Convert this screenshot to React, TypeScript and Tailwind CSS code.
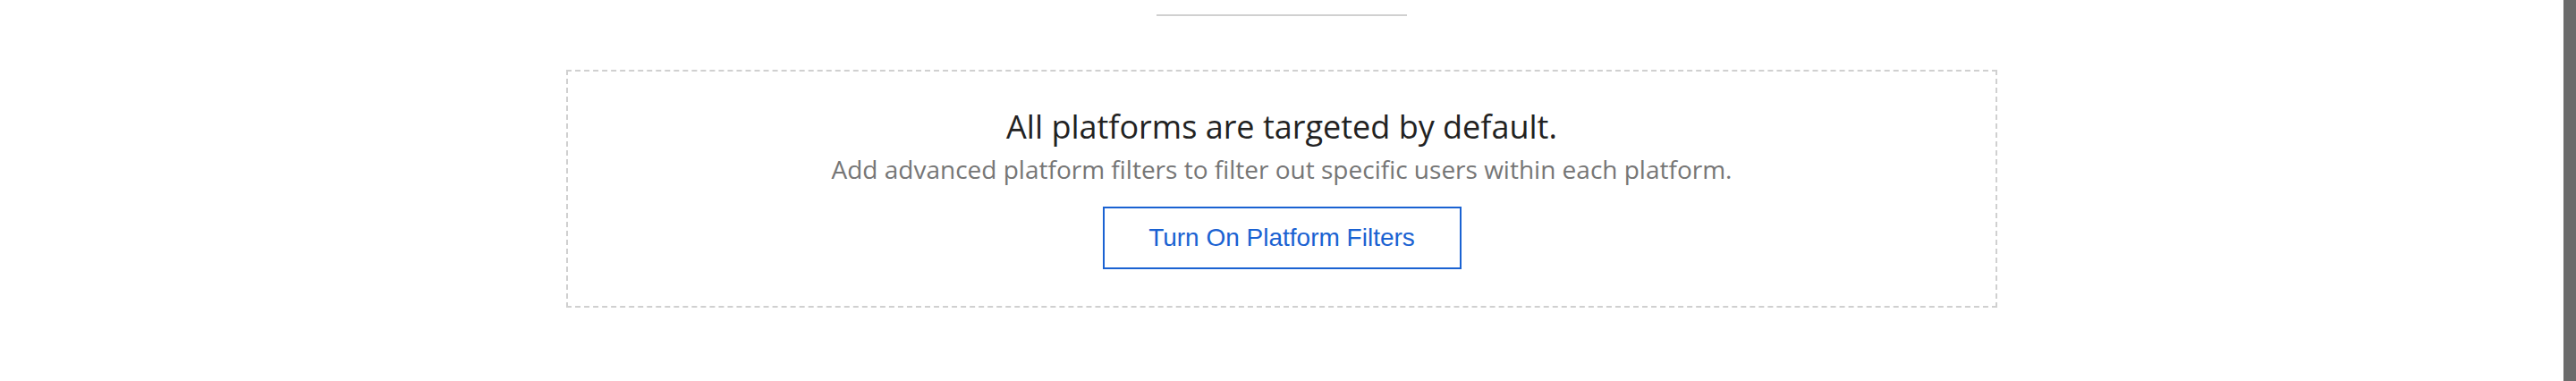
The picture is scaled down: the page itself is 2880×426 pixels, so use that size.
import React from "react";

const PlatformTargeting: React.FC = () => {
	return (
		<div className="flex flex-col items-center pt-[16px]">
			<div className="w-[280px] h-[2px] bg-[#d0d0d0]" />
			<div className="mt-[60px] w-[1600px] border-2 border-dashed border-[#d0d0d0] flex flex-col items-center pt-[42px] pb-[41px]">
				<h2 className="font-['Open_Sans',sans-serif] text-[36px] leading-[40px] text-[#222222]">
					All platforms are targeted by default.
				</h2>
				<p className="mt-[9px] font-['Open_Sans',sans-serif] text-[28px] leading-[36px] text-[#767676]">
					Add advanced platform filters to filter out specific users within each platform.
				</p>
				<button className="mt-[24px] w-[401px] h-[70px] border-2 border-[#1a62d2] bg-white font-['Liberation_Sans',Arial,sans-serif] text-[28px] text-[#1a62d2]">
					Turn On Platform Filters
				</button>
			</div>
		</div>
	);
};

const App: React.FC = () => {
	return (
		<div className="w-full h-[426px] flex bg-white overflow-hidden">
			<div className="flex-1">
				<PlatformTargeting />
			</div>
			<div className="w-[14px] h-full bg-[#6b6b6b]" />
		</div>
	);
};

export default App;
